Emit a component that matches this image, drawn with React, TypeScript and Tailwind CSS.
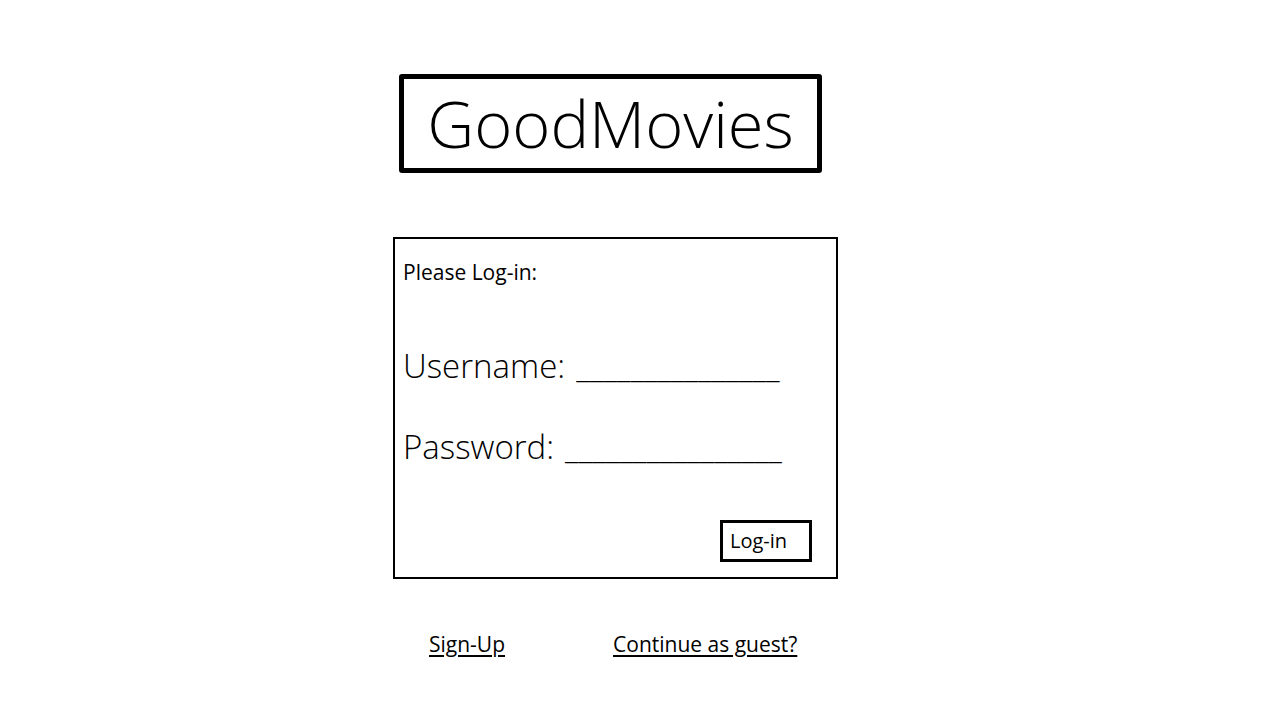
// GoodMovies log-in screen

const font = { fontFamily: '"Open Sans", "Noto Sans", sans-serif' };

function TitleBox() {
  return (
    <div className="ml-[399px] flex h-[99px] w-[423px] items-center justify-center rounded-[3px] border-[5px] border-black">
      <span className="text-[65px] font-light leading-none text-black">GoodMovies</span>
    </div>
  );
}

function Field({ label, blanks, gap }: { label: string; blanks: string; gap: string }) {
  return (
    <div className="flex items-baseline whitespace-nowrap text-[33px] font-light leading-none text-black">
      <span>{label}</span>
      <span className={gap}>{blanks}</span>
    </div>
  );
}

function LoginBox() {
  return (
    <div className="ml-[393px] mt-[64px] flex h-[342px] w-[445px] flex-col border-2 border-black pl-[8px] pr-[24px]">
      <p className="mt-[23px] text-[21px] leading-none text-black">Please Log-in:</p>
      <div className="mt-[66px]">
        <Field label="Username:" blanks="_______________" gap="ml-[11px]" />
      </div>
      <div className="mt-[48px]">
        <Field label="Password:" blanks="________________" gap="ml-[11px]" />
      </div>
      <div className="mt-auto mb-[15px] flex justify-end">
        <button className="flex h-[42px] w-[92px] items-center border-[3px] border-black pl-[7px] text-[20px] text-black">
          Log-in
        </button>
      </div>
    </div>
  );
}

export default function App() {
  return (
    <div className="min-h-screen w-full bg-white pt-[74px]" style={font}>
      <TitleBox />
      <LoginBox />
      <div className="mt-[50px] flex items-baseline text-[21px] text-black">
        <a className="ml-[429px] underline underline-offset-[3px]">Sign-Up</a>
        <a className="ml-[108px] underline underline-offset-[3px]">Continue as guest?</a>
      </div>
    </div>
  );
}
